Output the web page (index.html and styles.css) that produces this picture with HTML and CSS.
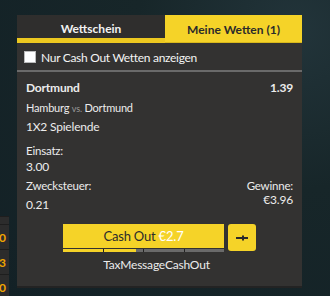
FILE: index.html
```html
<!DOCTYPE html>
<html>
<head>
<meta charset="utf-8">
<link rel="stylesheet" href="styles.css">
</head>
<body>
<div class="page">
  <div class="side">
    <div class="side-cell"></div>
    <div class="side-cell odd">1.50</div>
    <div class="side-cell odd">2.23</div>
    <div class="side-cell odd">3.10</div>
  </div>
  <div class="main">
    <div class="panel">
      <div class="tabs">
        <div class="tab tab-inactive">Wettschein</div>
        <div class="tab tab-active">Meine Wetten (1)</div>
      </div>
      <label class="filter">
        <span class="checkbox"></span>
        <span>Nur Cash Out Wetten anzeigen</span>
      </label>
      <div class="bet">
        <div class="row">
          <span class="pick">Dortmund</span>
          <span class="odds">1.39</span>
        </div>
        <div class="match">Hamburg <span class="vs">vs.</span> Dortmund</div>
        <div class="market">1X2 Spielende</div>
        <div class="label">Einsatz:</div>
        <div class="value">3.00</div>
        <div class="row tax-row">
          <div class="col">
            <div class="label">Zwecksteuer:</div>
            <div class="value">0.21</div>
          </div>
          <div class="col right">
            <div class="label">Gewinne:</div>
            <div class="value small-gap">€3.96</div>
          </div>
        </div>
        <div class="cashout">
          <div class="cashout-main">
            <button class="cashout-btn">Cash Out <span class="amount">€2.7</span></button>
            <div class="progress">
              <span class="seg on"></span>
              <span class="seg part"><span class="fill" style="width: 82%"></span></span>
              <span class="seg"></span>
              <span class="seg"></span>
            </div>
          </div>
          <button class="slider-btn">
            <svg width="12" height="6" viewBox="0 0 12 6"><rect x="0" y="2" width="12" height="2" fill="#2a2a2a"/><rect x="6" y="0.5" width="2" height="5" fill="#2a2a2a"/></svg>
          </button>
        </div>
        <div class="tax-msg">TaxMessageCashOut</div>
      </div>
    </div>
    <div class="next-panel"></div>
  </div>
</div>
</body>
</html>
```
FILE: styles.css
```css
html, body {
  margin: 0;
  padding: 0;
}
body {
  width: 330px;
  height: 296px;
  overflow: hidden;
  background: radial-gradient(circle at 90% 10%, #22343a 0%, #172629 40%, #132126 100%);
  font-family: Lato, "Open Sans", sans-serif;
  color: #ececec;
}
.page {
  display: flex;
  gap: 8px;
}
.side {
  width: 9px;
  padding-top: 216px;
  display: flex;
  flex-direction: column;
}
.side-cell {
  height: 24px;
  background: #2c2c2c;
  border-top: 1px solid #1e1e1e;
  overflow: hidden;
  display: flex;
  align-items: center;
  direction: rtl;
  padding-right: 3px;
}
.side-cell:first-child {
  height: 7px;
}
.side-cell.odd {
  color: #f0a500;
  font-weight: 700;
  font-size: 12px;
  white-space: nowrap;
  justify-content: flex-start;
}
.main {
  width: 285px;
  padding-top: 15px;
  display: flex;
  flex-direction: column;
  gap: 10px;
}
.panel {
  background: #333231;
  border-bottom: 2px solid #232323;
}
.tabs {
  display: flex;
  height: 28px;
}
.tab {
  display: flex;
  align-items: center;
  justify-content: center;
  font-weight: 700;
  font-size: 12px;
  box-sizing: border-box;
}
.tab-inactive {
  width: 148px;
  background: #2f2e2d;
  color: #f2f2f2;
  border-bottom: 5px solid #ecc820;
  padding-top: 3px;
}
.tab-active {
  flex: 1;
  background: #f5d328;
  color: #2b2b2b;
  border-bottom: 1px solid #d9b81c;
  padding-top: 2px;
}
.filter {
  display: flex;
  align-items: center;
  gap: 5px;
  height: 26px;
  padding-left: 7px;
  padding-top: 1px;
  border-bottom: 2px solid #6a6a6a;
  font-size: 12px;
  letter-spacing: -0.3px;
  color: #f4f4f4;
}
.checkbox {
  width: 12px;
  height: 12px;
  background: #fff;
  border: 1px solid #bbb;
  box-sizing: border-box;
}
.bet {
  padding: 8px 9px 14px 9px;
  letter-spacing: -0.2px;
}
.row {
  display: flex;
  justify-content: space-between;
}
.pick {
  font-weight: 700;
  font-size: 12px;
}
.odds {
  font-weight: 700;
  font-size: 12px;
}
.match {
  margin-top: 6px;
  font-size: 11px;
}
.vs {
  color: #9a9a9a;
  font-size: 9px;
}
.market {
  margin-top: 5px;
  font-size: 12px;
}
.label {
  margin-top: 10px;
  font-size: 11.5px;
}
.value {
  margin-top: 2px;
  font-size: 12px;
}
.tax-row {
  margin-top: 0;
}
.tax-row .label {
  margin-top: 5px;
}
.col.right {
  text-align: right;
}
.col .value {
  margin-top: 5px;
}
.col .value.small-gap {
  margin-top: 0;
}
.cashout {
  display: flex;
  justify-content: center;
  gap: 4px;
  margin-top: 12px;
}
.cashout-main {
  width: 161px;
  display: flex;
  flex-direction: column;
  gap: 1px;
}
.cashout-btn {
  height: 24px;
  border: none;
  background: #f5d328;
  font-family: Lato, sans-serif;
  font-size: 13px;
  letter-spacing: -0.2px;
  color: #2b2b2b;
  padding: 0;
}
.amount {
  color: #fff;
}
.progress {
  display: flex;
  gap: 1px;
  height: 3px;
  background: #222;
}
.seg {
  flex: 1;
  background: #6a6a6a;
  display: flex;
}
.seg.on {
  background: #f5d328;
}
.fill {
  background: #f5d328;
}
.slider-btn {
  width: 28px;
  height: 27px;
  border: none;
  border-radius: 3px;
  background: #f5d328;
  display: flex;
  align-items: center;
  justify-content: center;
  padding: 0;
}
.tax-msg {
  text-align: center;
  margin-top: 5px;
  font-size: 12px;
  padding-right: 6px;
}
.next-panel {
  height: 6px;
  background: #f5d328;
  border-top: 1px solid #d9b81c;
}
```
